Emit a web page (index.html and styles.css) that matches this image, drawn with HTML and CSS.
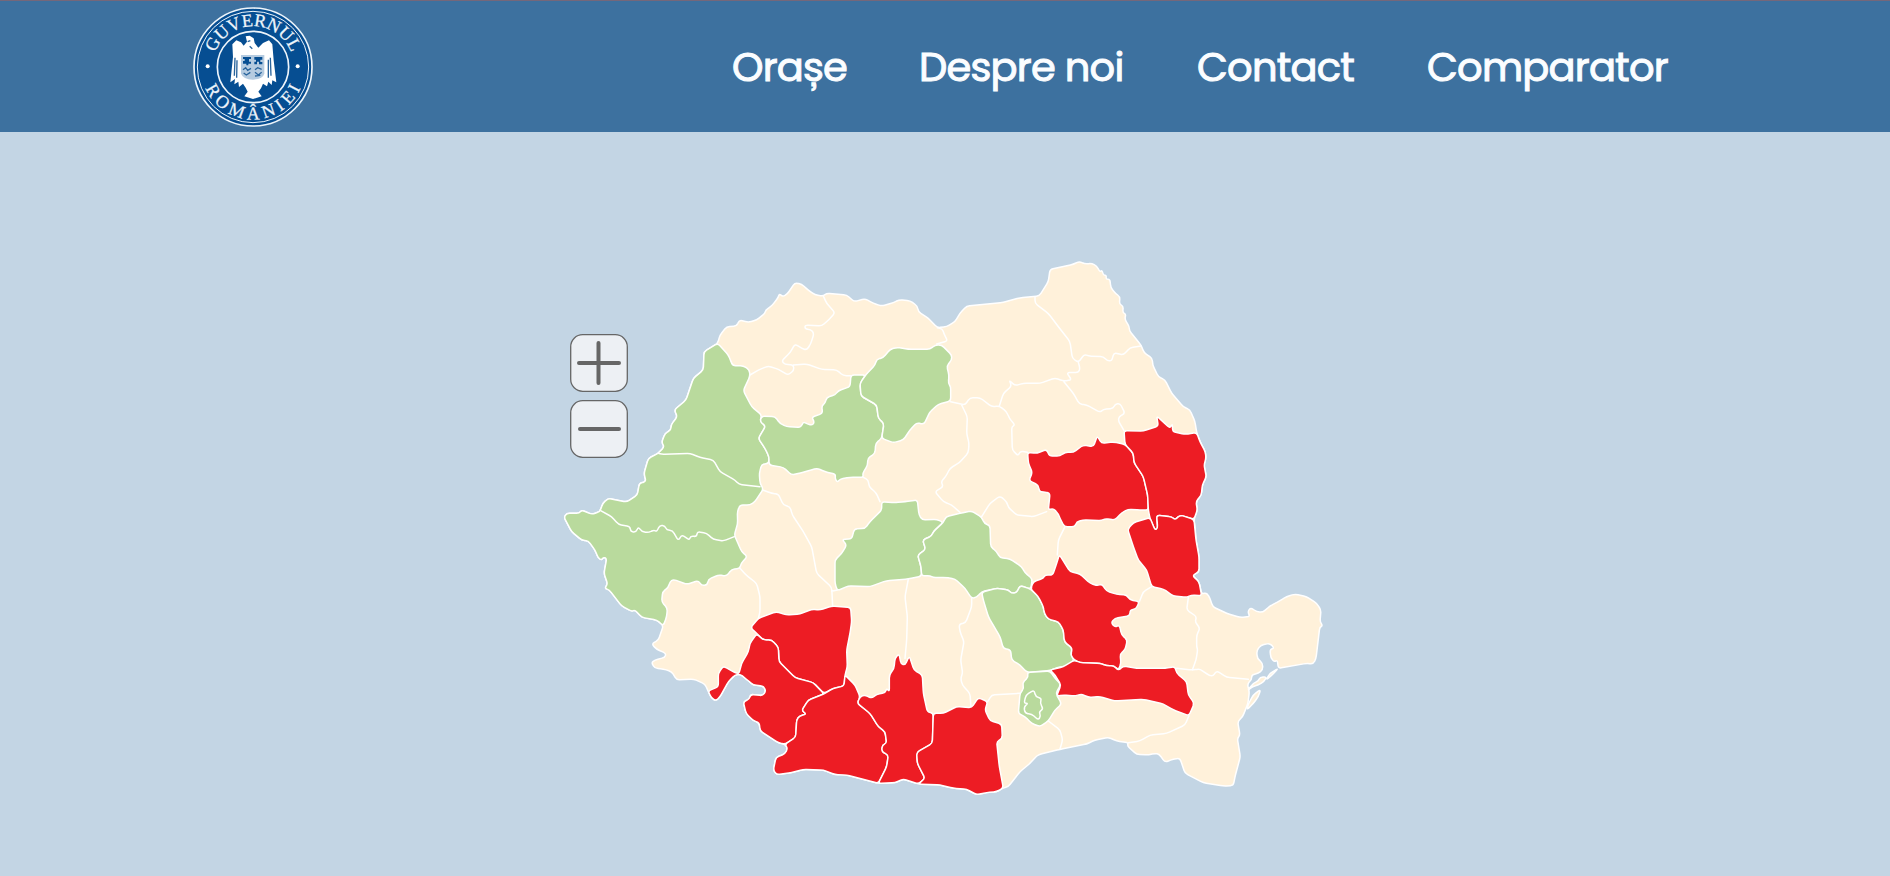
FILE: index.html
```html
<!DOCTYPE html>
<html lang="ro">
<head>
<meta charset="utf-8">
<title>Guvernul României</title>
<link rel="stylesheet" href="styles.css">
</head>
<body>
<header class="header">
  <a class="logo" href="#" aria-label="Guvernul României">
    <svg viewBox="0 0 360 360">
      <defs>
        <path id="arc-top" d="M65.400 221.700A122 122 0 1 1 294.600 221.700"/>
        <path id="arc-bottom" d="M34 236A156 156 0 0 0 326 236"/>
      </defs>
      <circle class="seal" cx="180" cy="180" r="177"/>
      <circle class="ring" cx="180" cy="180" r="177" stroke-width="5"/>
      <circle class="ring" cx="180" cy="180" r="167" stroke-width="3"/>
      <circle class="ring" cx="180" cy="180" r="107" stroke-width="5"/>
      <text class="seal-text"><textPath href="#arc-top" startOffset="50%" text-anchor="middle" textLength="296">GUVERNUL</textPath></text>
      <text class="seal-text"><textPath href="#arc-bottom" startOffset="50%" text-anchor="middle" textLength="362">ROMÂNIEI</textPath></text>
      <circle class="white" cx="44" cy="178" r="6"/>
      <circle class="white" cx="314" cy="178" r="6"/>
      <path class="white" d="M152 116L162 104L158 88L170 86L182 94L185 108L196 122L210 108L228 100L238 112L242 160L250 226L238 220L236 234L226 224L222 238L210 230L204 244L196 254L206 268L180 276L154 268L164 254L158 242L150 230L138 240L136 224L124 232L126 216L112 226L120 150L118 112L130 100L144 106Z"/>
      <path class="blue-line" d="M131 212L132 160M124 206L126 152M226 212L226 158M234 206L232 152"/>
      <path class="shield" d="M144 144H214V200Q210 216 180 218Q150 216 144 200Z"/>
      <path class="blue" d="M150 150H174V156H168V164H174V170H166V175H160V170H150V162H155V156H150ZM184 150H208V158H202V165H208V172H198V164H192V172H184V164H189V158H184Z"/>
      <path class="blue-line" d="M150 188L158 182L164 190L174 184M152 198L160 204L172 196M186 188L194 182L206 187M186 196L196 204L206 196M186 207L202 205"/>
      <path class="blue-line" d="M164 104L172 101M170 118L178 125"/>
    </svg>
  </a>
  <nav class="nav">
    <a class="nav-link cities" href="#">Orașe</a>
    <a class="nav-link about" href="#">Despre noi</a>
    <a class="nav-link contact" href="#">Contact</a>
    <a class="nav-link compare" href="#">Comparator</a>
  </nav>
</header>
<main class="main">
  <div class="map">
    <svg class="map-svg" viewBox="0 0 2400 1680">
      <!-- country -->
      <path class="county" d="M533 280L540 255L560 230L590 228L598 210L625 217L650 210L675 190L677 180L695 168L715 142L718 131L728 140L742 132L765 98L785 103L805 120L825 135L850 138L860 130L920 135L943 155L975 146L1000 160L1025 168L1060 158L1078 149L1110 152L1132 168L1135 185L1165 205L1192 233L1220 230L1245 215L1260 190L1280 168L1390 157L1440 143L1498 138L1525 95L1530 58L1600 43L1618 34L1635 42L1655 40L1670 48L1680 66L1686 60L1690 76L1699 75L1698 88L1710 88L1712 112L1726 130L1740 140L1738 163L1750 168L1748 188L1758 192L1754 207L1768 230L1768 242L1803 285L1812 308L1837 325L1838 345L1855 380L1875 390L1895 430L1930 470L1950 480L1965 515L1970 548L1980 575L1996 605L1998 625L1992 645L1999 680L1987 705L1984 735L1968 755L1972 780L1962 808L1966 840L1968 870L1977 920L1977 965L1967 970L1957 977L1977 995L1985 1032L2000 1028L2010 1045L2018 1070L2060 1090L2100 1102L2130 1100L2123 1085L2132 1073L2150 1085L2168 1087L2190 1068L2220 1052L2240 1040L2265 1032L2300 1040L2330 1060L2343 1080L2340 1115L2348 1127L2339 1132L2337 1150L2328 1225L2320 1242L2300 1240L2215 1255L2212 1230L2202 1236L2192 1222L2190 1198L2203 1195L2190 1180L2163 1185L2150 1202L2152 1225L2168 1240L2168 1260L2155 1270L2135 1275L2135 1288L2122 1302L2128 1325L2124 1360L2108 1400L2093 1415L2100 1455L2092 1465L2101 1520L2085 1580L2080 1607L2050 1608L1990 1598L1935 1570L1920 1525L1900 1527L1875 1537L1858 1513L1845 1510L1825 1515L1790 1513L1762 1488L1765 1478L1730 1473L1705 1462L1665 1470L1640 1482L1560 1498L1500 1513L1490 1518L1470 1540L1440 1565L1405 1610L1390 1614L1370 1625L1340 1628L1310 1634L1280 1618L1240 1615L1200 1605L1135 1602L1090 1587L1065 1598L1015 1600L920 1575L910 1572L885 1574L850 1560L790 1558L755 1568L710 1574L700 1560L708 1522L735 1512L743 1495L735 1483L715 1478L660 1442L658 1418L640 1412L618 1390L610 1355L628 1348L632 1333L668 1337L678 1323L670 1308L640 1305L620 1288L600 1272L585 1275L565 1295L540 1340L528 1352L515 1345L504 1323L495 1302L460 1287L410 1290L395 1265L370 1257L345 1255L334 1238L345 1230L375 1222L378 1210L350 1198L335 1182L355 1170L370 1127L350 1110L305 1102L285 1080L275 1084L245 1068L208 1020L194 1015L203 1002L192 970L200 925L190 922L185 930L175 925L165 900L145 873L125 870L95 845L72 802L80 790L118 790L125 780L155 793L180 785L188 760L205 745L260 756L292 735L298 700L318 695L312 670L325 625L355 610L373 590L365 578L375 550L393 540L393 525L412 500L403 480L438 450L460 385L490 360L492 305Z"/>
      <!-- delta islands -->
      <path class="county" d="M2122 1322L2140 1300L2155 1293L2160 1282L2180 1280L2172 1295L2155 1305L2138 1310ZM2125 1362L2140 1335L2162 1318L2155 1340L2140 1360L2120 1380ZM2215 1255L2190 1270L2178 1290L2195 1276Z"/>
      <!-- county borders -->
      <path class="border" d="M850 138L860 160L885 188L868 208L845 228L795 225L795 237L812 238L822 250L812 282L800 300L785 295L765 282L750 308L725 333L735 343L760 345L762 360L745 375L715 358L685 348L655 360L630 375M760 345L800 342L845 358L890 360L910 377L933 377M1192 233L1207 236L1212 252L1223 273L1190 282M1485 140L1485 160L1525 190L1555 230L1590 275L1597 325L1615 337L1633 313L1645 318L1690 320L1702 332L1715 333L1722 308L1750 315L1770 293L1803 288M1615 337L1620 355L1616 367L1580 368L1595 390L1570 393L1545 384L1500 400L1450 400L1425 407L1407 390L1415 408L1390 430L1378 468M1570 393L1600 430L1618 462L1640 465L1680 487L1690 478L1720 475L1725 463L1740 460L1755 490L1737 500L1735 512L1752 542M1232 455L1275 465L1290 443L1320 443L1355 470L1378 468L1400 485L1408 505L1425 525L1415 530L1417 600L1435 618L1440 603L1462 607M1265 465L1282 500L1280 550L1287 580L1285 608L1258 638L1230 655L1217 680L1203 695L1210 710L1185 725L1210 755L1235 765L1260 787M1325 800L1350 760L1380 738L1400 755L1405 772L1430 795L1480 800L1520 785M1575 830L1555 870L1552 915M970 682L985 690L987 710L1008 728L1020 755M668 720L695 730L715 732L730 765L750 770L757 795L790 845L815 890L830 970L875 1012L878 1068M875 1024L892 1020M600 955L618 975L650 1000L660 1040L660 1085L655 1105M1105 987L1095 1040L1102 1100L1100 1170L1095 1225M1295 1045L1295 1070L1277 1118L1257 1123L1260 1145L1272 1175L1262 1230L1268 1270L1262 1285L1267 1305L1290 1330L1293 1373M1343 1355L1355 1335L1440 1330M1525 1413L1560 1440L1568 1470L1560 1497M1798 1055L1810 1025L1835 1010M1945 1042L1940 1080L1970 1100L1965 1115L1980 1135L1970 1155L1970 1190L1973 1200L1968 1230L1957 1260M1910 1255L1957 1260L1980 1257L2000 1272L2018 1280L2030 1262L2060 1282L2125 1288M1947 1397L1935 1425L1880 1450L1830 1455L1800 1473L1765 1478"/>
      <!-- west -->
      <path class="county good" d="M533 280L565 315L578 347L610 347L628 360L630 378L610 422L635 470L665 495L660 515L677 528L655 565L675 595L687 620L687 640L665 643L658 670L660 700L670 717L645 755L630 765L600 765L592 785L593 820L583 855L605 905L622 920L603 940L600 955L575 958L560 978L535 975L505 988L502 1005L485 1007L475 992L440 1003L400 988L390 995L385 1012L368 1025L365 1055L382 1075L380 1100L370 1127L350 1110L305 1102L285 1080L275 1084L245 1068L208 1020L194 1015L203 1002L192 970L200 925L190 922L185 930L175 925L165 900L145 873L125 870L95 845L72 802L80 790L118 790L125 780L155 793L180 785L188 760L205 745L260 756L292 735L298 700L318 695L312 670L325 625L355 610L373 590L365 578L375 550L393 540L393 525L412 500L403 480L438 450L460 385L490 360L492 305Z"/>
      <path class="border" d="M355 610L365 613L450 610L480 622L520 630L540 665L585 690L597 703L660 710M182 782L215 800L235 823L270 830L272 845L288 847L295 830L305 845L325 848L342 840L350 845L360 825L375 828L380 840L398 842L415 872L425 855L437 862L448 870L452 858L470 860L472 845L500 850L520 868L550 873L583 860"/>
      <!-- Cluj -->
      <path class="county good" d="M665 498L705 500L720 520L740 530L783 532L790 515L802 522L818 526L823 515L815 502L848 490L845 468L855 460L860 442L885 435L895 422L930 410L933 375L977 375L960 400L963 438L1010 465L1015 505L1032 520L1025 565L1007 580L1005 610L983 625L983 645L968 670L970 682L930 682L900 687L892 697L885 685L887 673L855 665L832 655L805 662L790 667L755 675L730 652L687 645L687 620L675 595L655 565L677 528L660 515Z"/>
      <!-- Bistrița-Năsăud -->
      <path class="county good" d="M977 375L1005 345L1010 328L1030 323L1050 298L1070 292L1105 298L1170 298L1185 285L1205 285L1235 315L1235 330L1220 348L1227 375L1225 400L1232 410L1232 453L1195 463L1170 485L1152 523L1130 518L1110 540L1090 570L1060 578L1025 565L1032 520L1015 505L1010 465L963 438L960 400Z"/>
      <!-- Sibiu -->
      <path class="county good" d="M1025 755L1065 758L1095 755L1132 750L1137 795L1147 810L1190 808L1210 817L1180 845L1175 858L1148 870L1157 898L1133 915L1143 950L1145 978L1105 987L1040 992L990 1010L925 1008L892 1022L885 1000L885 930L905 910L920 885L906 868L935 867L943 837L975 835L990 815L1025 780Z"/>
      <!-- Brașov -->
      <path class="county good" d="M1210 817L1218 800L1260 790L1295 783L1325 802L1333 820L1350 827L1352 890L1370 905L1380 923L1410 927L1445 950L1455 968L1477 987L1472 1017L1440 1007L1430 1028L1415 1030L1405 1020L1370 1015L1325 1025L1310 1042L1295 1045L1275 1015L1245 987L1215 982L1180 983L1170 977L1145 978L1143 950L1133 915L1157 898L1148 870L1175 858L1180 845Z"/>
      <!-- Prahova -->
      <path class="county good" d="M1325 1027L1370 1015L1405 1020L1415 1030L1430 1028L1440 1007L1472 1017L1495 1040L1510 1070L1513 1090L1525 1108L1555 1115L1570 1140L1573 1175L1597 1195L1592 1215L1603 1230L1580 1250L1560 1250L1530 1262L1460 1267L1440 1245L1415 1230L1412 1200L1390 1195L1380 1160L1345 1100L1330 1050Z"/>
      <!-- Ilfov and București -->
      <path class="county good" d="M1462 1267L1530 1263L1545 1285L1563 1303L1547 1330L1565 1362L1545 1380L1525 1413L1500 1430L1475 1420L1455 1400L1435 1390L1440 1330L1452 1315L1447 1300L1465 1280Z"/>
      <path class="border" d="M1452 1360L1458 1335L1482 1320L1487 1340L1505 1345L1500 1360L1510 1377L1497 1385L1502 1398L1495 1410L1475 1392L1455 1390L1452 1370L1465 1360Z"/>
      <!-- Bacău -->
      <path class="county bad" d="M1463 607L1490 610L1520 598L1528 618L1560 618L1575 607L1600 607L1630 585L1660 590L1672 558L1685 580L1720 576L1755 583L1780 610L1782 638L1810 680L1823 735L1825 780L1800 780L1765 778L1745 788L1725 810L1695 806L1685 812L1630 810L1610 815L1605 830L1573 830L1560 805L1555 792L1540 775L1525 780L1530 730L1510 725L1498 725L1495 705L1467 692L1477 667L1465 640Z"/>
      <!-- Vaslui -->
      <path class="county bad" d="M1752 542L1810 543L1855 528L1850 498L1872 518L1890 535L1897 520L1898 545L1935 553L1970 548L1980 575L1996 605L1998 625L1992 645L1999 680L1987 705L1984 735L1968 755L1972 780L1962 808L1920 795L1905 810L1895 800L1850 796L1853 835L1845 840L1830 805L1825 780L1823 735L1810 680L1782 638L1780 610L1755 583Z"/>
      <!-- Galați -->
      <path class="county bad" d="M1830 803L1780 818L1763 838L1780 890L1795 930L1820 960L1835 1010L1870 1017L1900 1038L1940 1042L1955 1035L1985 1037L1977 995L1957 977L1977 965L1977 920L1968 870L1962 808L1920 795L1905 810L1895 800L1850 796L1853 835L1845 840Z"/>
      <!-- Buzău -->
      <path class="county bad" d="M1558 914L1590 965L1620 972L1650 1000L1672 1007L1685 1002L1700 1023L1730 1033L1760 1035L1770 1050L1798 1055L1788 1077L1770 1080L1770 1097L1725 1105L1713 1118L1725 1132L1738 1125L1745 1155L1762 1170L1755 1200L1740 1212L1743 1240L1735 1260L1722 1247L1700 1247L1680 1240L1620 1238L1603 1230L1592 1215L1597 1195L1573 1175L1570 1140L1555 1115L1525 1108L1513 1090L1510 1070L1495 1040L1472 1017L1480 995L1510 985L1515 975L1538 975L1550 940Z"/>
      <!-- Ialomița -->
      <path class="county bad" d="M1603 1230L1620 1238L1680 1240L1700 1247L1722 1247L1735 1262L1750 1248L1790 1255L1875 1255L1905 1250L1910 1270L1940 1295L1945 1335L1963 1360L1947 1397L1900 1380L1870 1362L1810 1348L1725 1353L1680 1340L1645 1342L1625 1332L1605 1338L1570 1335L1550 1338L1563 1305L1545 1275L1530 1260L1570 1250Z"/>
      <!-- Gorj -->
      <path class="county bad" d="M932 1072L875 1068L840 1080L815 1078L780 1092L740 1095L708 1085L655 1105L632 1133L650 1150L670 1170L695 1170L715 1192L717 1235L765 1283L820 1298L852 1330L880 1315L912 1308L915 1275L922 1250L920 1200L930 1150L935 1115Z"/>
      <!-- Mehedinți -->
      <path class="county bad" d="M650 1152L630 1180L625 1205L605 1240L597 1270L590 1270L570 1260L550 1248L535 1270L535 1310L504 1323L515 1345L528 1352L540 1340L565 1295L585 1275L600 1272L620 1288L640 1305L670 1308L678 1323L668 1337L632 1333L628 1348L610 1355L618 1390L640 1412L658 1418L660 1442L715 1478L735 1483L767 1462L770 1410L778 1398L800 1392L785 1382L805 1350L852 1332L820 1298L765 1283L717 1235L715 1192L695 1170L670 1170Z"/>
      <!-- Dolj -->
      <path class="county bad" d="M735 1483L767 1462L770 1410L778 1398L800 1392L785 1382L805 1350L852 1332L880 1315L912 1308L915 1275L945 1305L960 1340L952 1360L990 1390L1015 1430L1035 1445L1040 1480L1027 1485L1025 1505L1045 1515L1040 1550L1015 1600L920 1575L885 1574L850 1560L790 1558L755 1568L710 1574L700 1560L708 1522L735 1512L743 1495Z"/>
      <!-- Olt -->
      <path class="county bad" d="M960 1340L975 1335L995 1345L1010 1333L1036 1328L1040 1315L1048 1325L1048 1275L1062 1255L1065 1225L1077 1211L1083 1242L1095 1245L1108 1218L1122 1260L1147 1275L1150 1330L1162 1385L1180 1390L1177 1480L1130 1507L1132 1540L1155 1585L1135 1602L1090 1587L1065 1598L1015 1600L1040 1550L1045 1515L1025 1505L1027 1485L1040 1480L1035 1445L1015 1430L990 1390L952 1360Z"/>
      <!-- Teleorman -->
      <path class="county bad" d="M1180 1390L1210 1390L1250 1370L1295 1373L1315 1343L1343 1355L1335 1380L1350 1412L1385 1422L1387 1465L1370 1475L1378 1550L1390 1614L1370 1625L1340 1628L1310 1634L1280 1618L1240 1615L1200 1605L1135 1602L1155 1585L1132 1540L1130 1507L1177 1480Z"/>
    </svg>
    <div class="zoom">
      <button class="zoom-btn" aria-label="Mărește"><svg viewBox="0 0 58 58"><rect x=".7" y=".7" width="56.600" height="56.600" rx="12"/><path d="M9 29H49M28.500 9V49"/></svg></button>
      <button class="zoom-btn" aria-label="Micșorează"><svg viewBox="0 0 58 58"><rect x=".7" y=".7" width="56.600" height="56.600" rx="12"/><path d="M10 29H49"/></svg></button>
    </div>
  </div>
</main>
<script src="map.js"></script>
</body>
</html>
```
FILE: map.js
```js
// Rounds the corners of the county polygons and border lines.
const RADIUS = 9;

function roundPolyline(part) {
  const closed = /Z\s*$/.test(part);
  const nums = part.match(/[\d.]+/g).map(Number);
  const pts = [];
  for (let i = 0; i < nums.length; i += 2) pts.push([nums[i], nums[i + 1]]);
  const toward = (a, b) => {
    const len = Math.hypot(b[0] - a[0], b[1] - a[1]) || 1;
    const t = Math.min(RADIUS, len / 2) / len;
    return (a[0] + (b[0] - a[0]) * t).toFixed(1) + ' ' + (a[1] + (b[1] - a[1]) * t).toFixed(1);
  };
  const n = pts.length;
  let d = closed ? '' : 'M' + pts[0].join(' ');
  for (let i = closed ? 0 : 1; i < (closed ? n : n - 1); i++) {
    const p = pts[i];
    d += (d ? 'L' : 'M') + toward(p, pts[(i + n - 1) % n]);
    d += 'Q' + p.join(' ') + ' ' + toward(p, pts[(i + 1) % n]);
  }
  return d + (closed ? 'Z' : 'L' + pts[n - 1].join(' '));
}

document.querySelectorAll('.map-svg path').forEach((path) => {
  const parts = path.getAttribute('d').match(/M[^M]+/g);
  path.setAttribute('d', parts.map(roundPolyline).join(''));
});
```
FILE: styles.css
```css
* { box-sizing: border-box; }
body {
  margin: 0;
  height: 876px;
  overflow: hidden;
  background: #c3d5e4;
  font-family: Poppins, Inter, "Noto Sans", sans-serif;
}
.header {
  height: 132px;
  padding: 1px 222px 0 193px;
  border-top: 1px solid #75677a;
  background: #3d719f;
  display: flex;
  align-items: center;
  justify-content: space-between;
}
.logo, .logo svg { display: block; width: 120px; height: 120px; }
.seal, .blue { fill: #064e92; }
.ring { fill: none; stroke: #eef5fb; }
.white { fill: #fff; }
.shield { fill: #b5cbe0; }
.blue-line { fill: none; stroke: #29649c; stroke-width: 4; }
.seal-text { font: 54px "Liberation Serif", serif; fill: #eef5fb; stroke: #eef5fb; stroke-width: .8px; }
.nav { display: flex; gap: 72px; }
.nav-link {
  color: #fbfdff;
  font-size: 40px;
  line-height: 58px;
  font-weight: 400;
  letter-spacing: -.8px;
  -webkit-text-stroke: 1px #fbfdff;
  text-decoration: none;
  white-space: nowrap;
}
.cities { width: 115px; }
.about { width: 206px; }
.contact { width: 158px; }
.compare { width: 241px; }
.main { padding: 118px 0 0 540px; }
.map { position: relative; width: 800px; height: 560px; }
.map-svg { display: block; width: 800px; height: 560px; }
.county { fill: #fff1da; stroke: #fff; stroke-width: 4.500; stroke-linejoin: round; }
.good { fill: #b9da9d; }
.bad { fill: #ed1c24; }
.border { fill: none; stroke: #fff; stroke-width: 4.500; stroke-linejoin: round; stroke-linecap: round; }
.zoom {
  position: absolute;
  left: 30px;
  top: 84px;
  display: flex;
  flex-direction: column;
  gap: 8px;
}
.zoom-btn {
  width: 58px;
  height: 58px;
  padding: 0;
  border: 0;
  background: none;
}
.zoom-btn svg { display: block; width: 58px; height: 58px; }
.zoom-btn rect { fill: #edf0f4; stroke: #666; stroke-width: 1.300; }
.zoom-btn path { stroke: #666; stroke-width: 4; stroke-linecap: round; }
```
